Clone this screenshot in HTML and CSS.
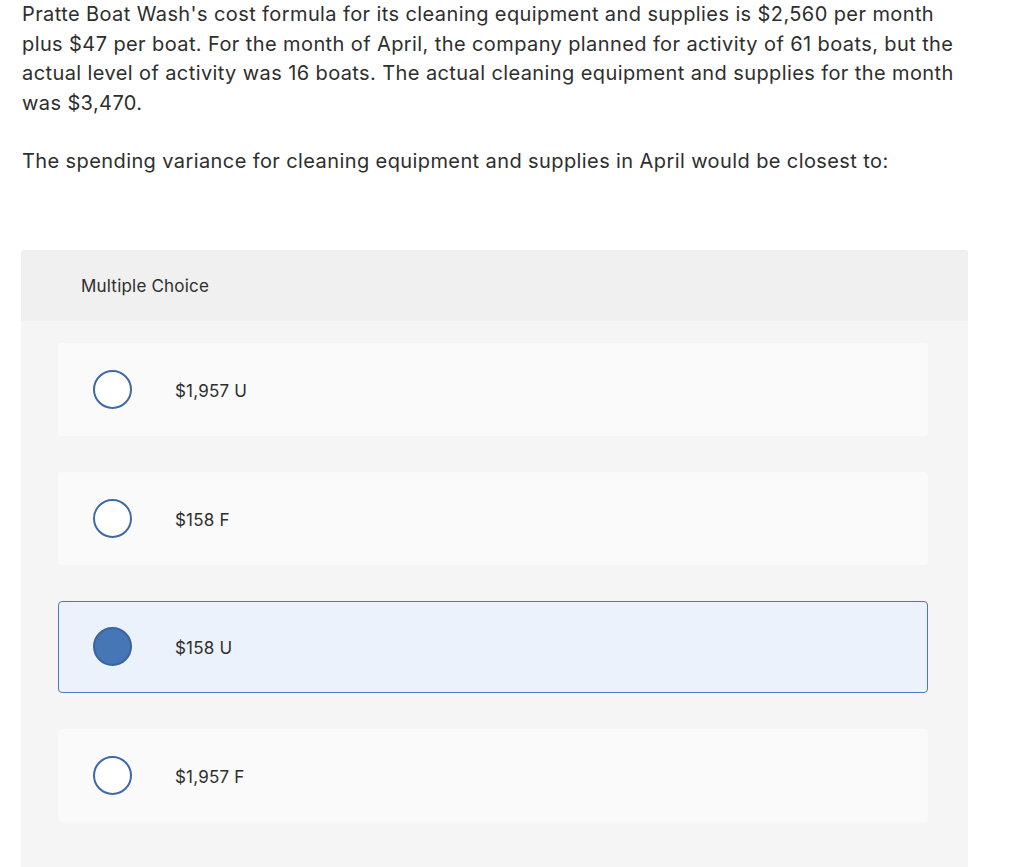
FILE: index.html
```html
<!DOCTYPE html>
<html>
<head>
<meta charset="utf-8">
<link rel="stylesheet" href="styles.css">
</head>
<body>
<div class="page">
  <p class="question">Pratte Boat Wash's cost formula for its cleaning equipment and supplies is $2,560 per month plus $47 per boat. For the month of April, the company planned for activity of 61 boats, but the actual level of activity was 16 boats. The actual cleaning equipment and supplies for the month was $3,470.</p>
  <p class="prompt">The spending variance for cleaning equipment and supplies in April would be closest to:</p>
  <div class="card">
    <div class="card-head">Multiple Choice</div>
    <div class="card-body">
      <div class="option"><span class="radio"></span><span class="label">$1,957 U</span></div>
      <div class="option"><span class="radio"></span><span class="label">$158 F</span></div>
      <div class="option selected"><span class="radio"></span><span class="label">$158 U</span></div>
      <div class="option"><span class="radio"></span><span class="label">$1,957 F</span></div>
    </div>
  </div>
</div>
</body>
</html>
```
FILE: styles.css
```css
html, body {
  margin: 0;
  padding: 0;
  background: #ffffff;
}
body {
  font-family: "Inter", "Open Sans", "Liberation Sans", sans-serif;
  color: #2e2e2e;
}
.page {
  padding-left: 22px;
  width: 946px;
}
.question {
  margin: 0;
  font-size: 20px;
  line-height: 29.5px;
  letter-spacing: 0.4px;
  width: 952px;
}
.prompt {
  margin: 29px 0 0 0;
  font-size: 20px;
  line-height: 29.5px;
  letter-spacing: 0.4px;
}
.card {
  margin-top: 73px;
  margin-left: -1px;
  width: 947px;
  background: #f5f5f5;
  border-radius: 3px 3px 0 0;
  overflow: hidden;
}
.card-head {
  height: 71px;
  background: #f0f0f0;
  padding-left: 60px;
  padding-top: 2px;
  box-sizing: border-box;
  display: flex;
  align-items: center;
  font-size: 17px;
  letter-spacing: 0.2px;
}
.card-body {
  padding: 22px 40px 80px 37px;
  display: flex;
  flex-direction: column;
  gap: 36px;
}
.option {
  height: 93px;
  background: #fafafa;
  border-radius: 4px;
  display: flex;
  align-items: center;
  padding-left: 35px;
  box-sizing: border-box;
}
.option.selected {
  background: #ebf2fb;
  border: 1px solid #4a7abd;
  padding-left: 34px;
  height: 92px;
}
.radio {
  width: 39px;
  height: 39px;
  box-sizing: border-box;
  border: 2px solid #3d69a7;
  border-radius: 50%;
  background: #ffffff;
  flex: none;
}
.option.selected .radio {
  background: #4676b5;
  border-color: #3a64a0;
}
.label {
  margin-left: 43px;
  padding-top: 3px;
  font-size: 17px;
  letter-spacing: 0.2px;
}
```
